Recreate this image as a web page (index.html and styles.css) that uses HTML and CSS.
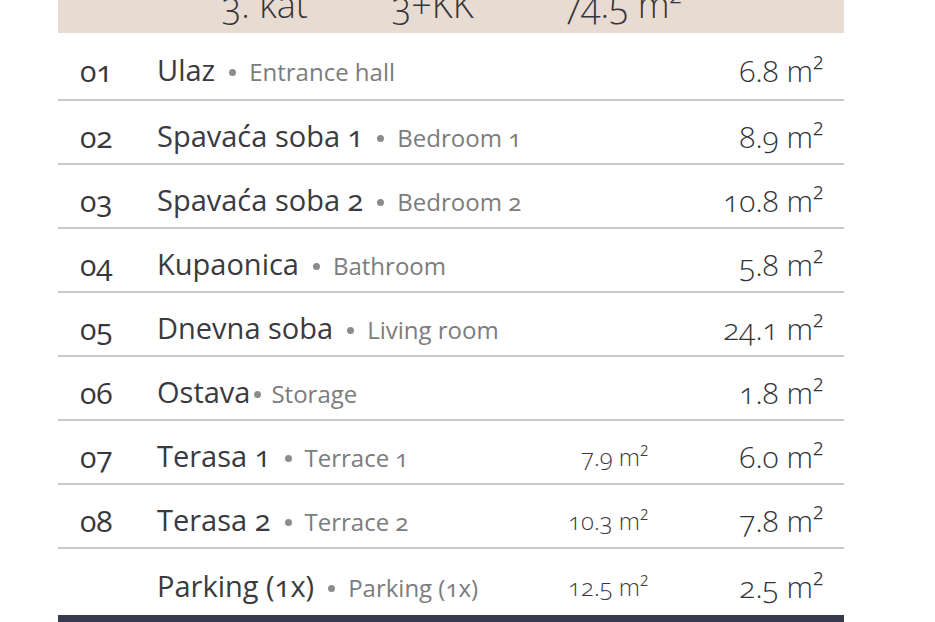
FILE: index.html
```html
<!DOCTYPE html>
<html lang="hr">
<head>
<meta charset="utf-8">
<title>3. kat</title>
<link rel="stylesheet" href="styles.css">
</head>
<body>
<div class="sheet">
  <div class="head">
    <div class="head-inner">
      <span class="hc">3. kat</span>
      <span class="hc">3+KK</span>
      <span class="hc">74.5 m²</span>
    </div>
  </div>
  <div class="rows">
    <div class="row first"><span class="no">01</span><span class="name">Ulaz<span class="dot"></span><span class="en">Entrance hall</span></span><span class="mid"></span><span class="val">6.8 m²</span></div>
    <div class="row"><span class="no">02</span><span class="name">Spavaća soba 1<span class="dot"></span><span class="en">Bedroom 1</span></span><span class="mid"></span><span class="val">8.9 m²</span></div>
    <div class="row"><span class="no">03</span><span class="name">Spavaća soba 2<span class="dot"></span><span class="en">Bedroom 2</span></span><span class="mid"></span><span class="val">10.8 m²</span></div>
    <div class="row"><span class="no">04</span><span class="name">Kupaonica<span class="dot"></span><span class="en">Bathroom</span></span><span class="mid"></span><span class="val">5.8 m²</span></div>
    <div class="row"><span class="no">05</span><span class="name">Dnevna soba<span class="dot"></span><span class="en">Living room</span></span><span class="mid"></span><span class="val">24.1 m²</span></div>
    <div class="row"><span class="no">06</span><span class="name">Ostava<span class="dot tight"></span><span class="en">Storage</span></span><span class="mid"></span><span class="val">1.8 m²</span></div>
    <div class="row"><span class="no">07</span><span class="name">Terasa 1<span class="dot"></span><span class="en">Terrace 1</span></span><span class="mid">7.9 m²</span><span class="val">6.0 m²</span></div>
    <div class="row"><span class="no">08</span><span class="name">Terasa 2<span class="dot"></span><span class="en">Terrace 2</span></span><span class="mid">10.3 m²</span><span class="val">7.8 m²</span></div>
    <div class="row last"><span class="no"></span><span class="name">Parking (1x)<span class="dot"></span><span class="en">Parking (1x)</span></span><span class="mid">12.5 m²</span><span class="val">2.5 m²</span></div>
  </div>
  <div class="foot"></div>
</div>
</body>
</html>
```

FILE: styles.css
```css
html, body {
  margin: 0;
  padding: 0;
  background: #ffffff;
}
* {
  box-sizing: border-box;
}
body {
  font-family: "Open Sans", "Noto Sans", sans-serif;
  font-feature-settings: "onum" 1;
  font-variant-numeric: oldstyle-nums;
  color: #3b3b3f;
  overflow: hidden;
}
.sheet {
  width: 786px;
  margin-left: 58px;
  height: 622px;
  display: flex;
  flex-direction: column;
}
.head {
  height: 33px;
  flex: 0 0 33px;
  background: #e8dbd2;
  overflow: hidden;
}
.head-inner {
  display: flex;
  padding-left: 164px;
  margin-top: -15px;
  font-size: 36px;
  font-weight: 300;
  line-height: 40px;
  color: #35353a;
}
.hc {
  width: 170px;
  white-space: nowrap;
}
.rows {
  display: flex;
  flex-direction: column;
}
.row {
  display: grid;
  grid-template-columns: 77px minmax(0, 1fr) 190px 175px;
  align-items: center;
  height: 64px;
  padding: 10px 21px 0 22px;
  border-bottom: 2px solid #c9c9c9;
  font-size: 29px;
  line-height: 34px;
  white-space: nowrap;
}
.row.first {
  height: 68px;
}
.row.last {
  height: 66px;
  border-bottom: none;
}
.no {
  color: #38383c;
  font-size: 30px;
  font-weight: 400;
}
.name {
  color: #3a3a3f;
  font-weight: 400;
}
.dot {
  display: inline-block;
  width: 7px;
  height: 7px;
  border-radius: 50%;
  background: #8c8c8c;
  margin: 0 13px 0 14px;
  vertical-align: 5px;
}
.dot.tight {
  margin-left: 4px;
  margin-right: 10px;
}
.en {
  color: #7c7c7c;
  font-size: 24px;
}
.mid {
  text-align: right;
  font-size: 24px;
  font-weight: 300;
  color: #3a3a3f;
}
.val {
  text-align: right;
  font-size: 30px;
  font-weight: 300;
  color: #333338;
}
.foot {
  flex: 1 1 auto;
  background: #363b50;
}
```
